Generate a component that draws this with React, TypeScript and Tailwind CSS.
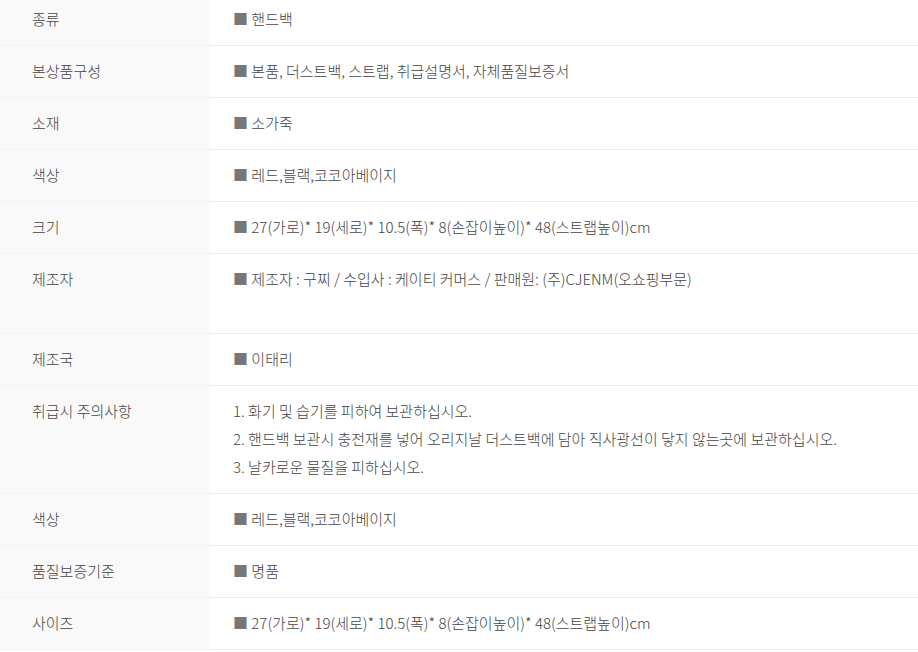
import React from "react";

type Row = { label: string; value: React.ReactNode; h: string };

const sq = "■ ";

const rows: Row[] = [
  { label: "종류", value: sq + "핸드백", h: "h-[52px]" },
  { label: "본상품구성", value: sq + "본품, 더스트백, 스트랩, 취급설명서, 자체품질보증서", h: "h-[52px]" },
  { label: "소재", value: sq + "소가죽", h: "h-[52px]" },
  { label: "색상", value: sq + "레드,블랙,코코아베이지", h: "h-[52px]" },
  { label: "크기", value: sq + "27(가로)* 19(세로)* 10.5(폭)* 8(손잡이높이)* 48(스트랩높이)cm", h: "h-[52px]" },
  { label: "제조자", value: sq + "제조자 : 구찌 / 수입사 : 케이티 커머스 / 판매원: (주)CJENM(오쇼핑부문)", h: "h-[80px]" },
  { label: "제조국", value: sq + "이태리", h: "h-[52px]" },
  {
    label: "취급시 주의사항",
    value: (
      <div className="leading-[28px]">
        <p>1. 화기 및 습기를 피하여 보관하십시오.</p>
        <p>2. 핸드백 보관시 충전재를 넣어 오리지날 더스트백에 담아 직사광선이 닿지 않는곳에 보관하십시오.</p>
        <p>3. 날카로운 물질을 피하십시오.</p>
      </div>
    ),
    h: "h-[108px]",
  },
  { label: "색상", value: sq + "레드,블랙,코코아베이지", h: "h-[52px]" },
  { label: "품질보증기준", value: sq + "명품", h: "h-[52px]" },
  { label: "사이즈", value: sq + "27(가로)* 19(세로)* 10.5(폭)* 8(손잡이높이)* 48(스트랩높이)cm", h: "h-[52px]" },
];

const App = () => {
  return (
    <div className="w-[918px] h-[652px] overflow-hidden bg-white font-['Noto_Sans_CJK_KR',sans-serif] font-light text-[15px] text-[#444]">
      <div className="-mt-[6px]">
        {rows.map((r, i) => (
          <div key={i} className={`flex ${r.h}`}>
            <div className="w-[209px] shrink-0 bg-[#f9f9f9] border-b border-[#f3f3f3] pl-[32px] pt-[15px] leading-[20px]">
              {r.label}
            </div>
            <div
              className={`flex-1 border-b border-[#ededed] pl-[24px] ${
                typeof r.value === "string" ? "pt-[15px] leading-[20px]" : "pt-[11px]"
              }`}
            >
              {typeof r.value === "string" ? (
                <span>
                  <span className="text-[#777]">■</span>
                  {r.value.slice(1)}
                </span>
              ) : (
                r.value
              )}
            </div>
          </div>
        ))}
      </div>
    </div>
  );
};

export default App;
